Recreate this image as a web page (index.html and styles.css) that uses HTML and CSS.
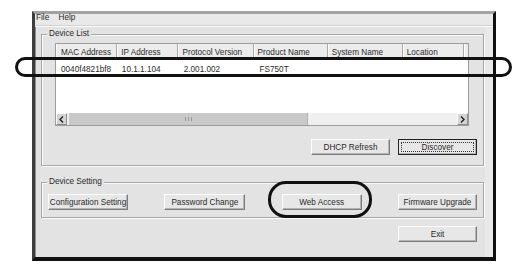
FILE: index.html
```html
<!DOCTYPE html>
<html lang="en">
<head>
  <meta charset="UTF-8">
  <title>Device Discovery</title>
  <link rel="stylesheet" href="styles.css">
</head>
<body>

  <div class="window">
    <div class="menu">
      <span class="menu-item">File</span>
      <span class="menu-item">Help</span>
    </div>

    <div class="main">
      <div class="group group-list">
        <div class="group-title">Device List</div>

        <div class="list">
          <div class="list-head">
            <div class="col c1">MAC Address</div>
            <div class="col c2">IP Address</div>
            <div class="col c3">Protocol Version</div>
            <div class="col c4">Product Name</div>
            <div class="col c5">System Name</div>
            <div class="col c6">Location</div>
            <div class="col c7"></div>
          </div>
          <div class="list-body">
            <div class="list-row">
              <div class="col c1">0040f4821bf8</div>
              <div class="col c2">10.1.1.104</div>
              <div class="col c3">2.001.002</div>
              <div class="col c4">FS750T</div>
              <div class="col c5"></div>
              <div class="col c6"></div>
            </div>
          </div>
          <div class="hscroll">
            <div class="arrow">
              <svg width="5" height="7" viewBox="0 0 5 7"><path d="M4 0.5 L1 3.5 L4 6.5" fill="none" stroke="#222" stroke-width="1.4"/></svg>
            </div>
            <div class="track">
              <div class="thumb"><span class="grip"></span></div>
            </div>
            <div class="arrow">
              <svg width="5" height="7" viewBox="0 0 5 7"><path d="M1 0.5 L4 3.5 L1 6.5" fill="none" stroke="#222" stroke-width="1.4"/></svg>
            </div>
          </div>
        </div>

        <div class="list-buttons">
          <button class="btn">DHCP Refresh</button>
          <button class="btn btn-default">Discover</button>
        </div>
      </div>

      <div class="group group-setting">
        <div class="group-title">Device Setting</div>
        <div class="setting-buttons">
          <button class="btn w80">Configuration Setting</button>
          <button class="btn w81">Password Change</button>
          <button class="btn w80">Web Access</button>
          <button class="btn">Firmware Upgrade</button>
        </div>
      </div>

      <div class="exit-row">
        <button class="btn">Exit</button>
      </div>
    </div>
  </div>

  <!-- marker rings drawn over the screenshot -->
  <div class="ring ring-row"></div>
  <div class="ring ring-web"></div>

</body>
</html>
```

FILE: styles.css
```css
:root {
  --face: #e3e3e3;
  --btn: #e7e7e7;
  --line: #a6a6a6;
  --ink: #2a2a2a;
}

body {
  margin: 0;
  background: #fff;
  font-family: "Liberation Sans", Arial, sans-serif;
  font-size: 8.2px;
  color: var(--ink);
  position: relative;
}

.window {
  margin: 11px 0 0 32px;
  width: 464px;
  height: 250px;
  box-sizing: border-box;
  background: var(--face);
  border-top: 3px solid #a2a2a2;
  border-left: 3px solid #3e3e3e;
  border-right: 3px solid #111;
  border-bottom: 4px solid #111;
  box-shadow: inset 1px 0 0 #8c8c8c, inset -8px 0 0 #e9e9e9;
}

.menu {
  height: 12px;
  line-height: 8px;
  padding-left: 1px;
  background: #e9e9e9;
  border-bottom: 1px solid #fbfbfb;
  box-shadow: 0 -1px 0 #d2d2d2 inset;
}

.menu-item {
  margin-right: 7px;
}

.main {
  padding: 0 9px 0 6px;
}

.group {
  border: 1px solid var(--line);
  box-shadow: inset 1px 1px 0 #fafafa, 1px 1px 0 #fafafa;
}

.group-title {
  display: table;
  margin: -6px 0 0 5px;
  padding: 0 2px;
  line-height: 10px;
  background: var(--face);
}

.group-list {
  margin-top: 7px;
  padding-bottom: 10px;
}

/* list view */
.list {
  margin: 4px 14px 0 13px;
  height: 81px;
  border: 1px solid #9c9c9c;
  background: #fff;
  display: flex;
  flex-direction: column;
}

.list-head {
  display: flex;
  height: 15px;
  line-height: 18px;
  background: #ececec;
  border-bottom: 1px solid #b4b4b4;
}

.list-head .col {
  border-right: 1px solid #aaa;
  box-shadow: inset 1px 0 0 #fff;
}

.list-head .c7 {
  flex: 1;
  border-right: 0;
}

.list-body {
  flex: 1;
}

.list-row {
  display: flex;
  height: 18px;
  line-height: 19px;
}

.col {
  padding-left: 4px;
  box-sizing: border-box;
  white-space: nowrap;
  overflow: hidden;
}

.c1 { width: 62px; padding-left: 5px; }
.c2 { width: 61px; }
.c3 { width: 77px; padding-left: 5px; }
.c4 { width: 75px; }
.c5 { width: 76px; }
.c6 { width: 62px; }

.hscroll {
  display: flex;
  height: 12px;
  background: #efefef;
}

.arrow {
  width: 11px;
  box-sizing: border-box;
  border: 1px solid;
  border-color: #fff #8e8e8e #8e8e8e #fff;
  background: #d4d4d4;
  display: flex;
  align-items: center;
  justify-content: center;
}

.track {
  flex: 1;
  display: flex;
  padding-left: 2px;
}

.thumb {
  width: 238px;
  background: #c9c9c9;
  border-right: 1px solid #b0b0b0;
  display: flex;
  align-items: center;
  justify-content: center;
}

.grip {
  width: 5px;
  height: 4px;
  border-left: 1px solid #999;
  border-right: 1px solid #999;
  box-shadow: inset 2px 0 0 #c9c9c9, inset 3px 0 0 #999;
}

/* buttons */
.btn {
  font: inherit;
  color: var(--ink);
  width: 79px;
  height: 16px;
  padding: 0;
  background: var(--btn);
  border: 1px solid;
  border-color: #fdfdfd #7c7c7c #7c7c7c #fdfdfd;
  box-shadow: inset -1px -1px 0 #b4b4b4;
}

.btn-default {
  border: 1px solid #222;
  outline: 1px dotted #333;
  outline-offset: -4px;
}

.w80 { width: 80px; }
.w81 { width: 81px; }

.list-buttons {
  display: flex;
  justify-content: flex-end;
  gap: 8px;
  margin: 13px 6px 0 0;
}

.group-setting {
  margin-top: 16px;
  padding-bottom: 7px;
}

.setting-buttons {
  display: flex;
  justify-content: space-between;
  margin-top: 7px;
  padding: 0 6px;
}

.exit-row {
  display: flex;
  justify-content: flex-end;
  margin: 8px 7px 0 0;
}

/* annotation rings */
.ring {
  position: absolute;
  box-sizing: border-box;
  border: 3px solid #111;
}

.ring-row {
  left: 15px;
  top: 57px;
  width: 497px;
  height: 20px;
  border-radius: 10px;
}

.ring-web {
  left: 268px;
  top: 181px;
  width: 104px;
  height: 37px;
  border-radius: 18px;
}
```
